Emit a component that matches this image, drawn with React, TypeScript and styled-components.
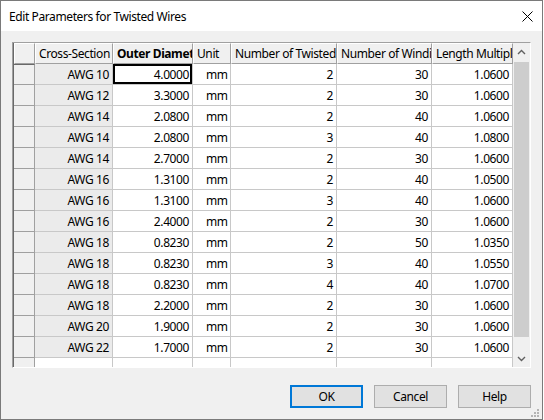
import styled, { createGlobalStyle } from "styled-components";

const GlobalStyle = createGlobalStyle`
  html, body {
    margin: 0;
    padding: 0;
    background: #ffffff;
  }
  body {
    font-family: "Noto Sans", "Liberation Sans", sans-serif;
    font-size: 12px;
    letter-spacing: -0.4px;
    color: #000;
  }
`;

type Row = [string, string, string, string, string, string];

const rows: Row[] = [
  ["AWG 10", "4.0000", "mm", "2", "30", "1.0600"],
  ["AWG 12", "3.3000", "mm", "2", "30", "1.0600"],
  ["AWG 14", "2.0800", "mm", "2", "40", "1.0600"],
  ["AWG 14", "2.0800", "mm", "3", "40", "1.0800"],
  ["AWG 14", "2.7000", "mm", "2", "30", "1.0600"],
  ["AWG 16", "1.3100", "mm", "2", "40", "1.0500"],
  ["AWG 16", "1.3100", "mm", "3", "40", "1.0600"],
  ["AWG 16", "2.4000", "mm", "2", "30", "1.0600"],
  ["AWG 18", "0.8230", "mm", "2", "50", "1.0350"],
  ["AWG 18", "0.8230", "mm", "3", "40", "1.0550"],
  ["AWG 18", "0.8230", "mm", "4", "40", "1.0700"],
  ["AWG 18", "2.2000", "mm", "2", "30", "1.0600"],
  ["AWG 20", "1.9000", "mm", "2", "30", "1.0600"],
  ["AWG 22", "1.7000", "mm", "2", "30", "1.0600"],
];

const headers = [
  "Cross-Section",
  "Outer Diameter",
  "Unit",
  "Number of Twisted Wires",
  "Number of Windings",
  "Length Multiplier",
];

const COLS = "21px 78px 80px 38px 106px 95px 81px";

const Window = styled.div`
  width: 543px;
  height: 420px;
  box-sizing: border-box;
  border: 1px solid #7a7a7a;
  background: #f0f0f0;
  display: flex;
  flex-direction: column;
`;

const TitleBar = styled.div`
  height: 30px;
  background: #ffffff;
  display: flex;
  align-items: center;
  justify-content: space-between;
  padding: 0 9px 0 8px;
  flex-shrink: 0;
`;

const Title = styled.span`
  font-size: 12px;
  color: #000;
`;

const CloseButton = styled.div`
  width: 12px;
  height: 12px;
  display: flex;
  align-items: center;
  justify-content: center;
`;

const Body = styled.div`
  flex: 1;
  display: flex;
  flex-direction: column;
  padding: 11px;
`;

const GridFrame = styled.div`
  height: 326px;
  display: flex;
  box-sizing: border-box;
  border-top: 1px solid #a0a0a0;
  border-left: 1px solid #a0a0a0;
  border-right: 1px solid #ffffff;
  border-bottom: 1px solid #ffffff;
  background: #ffffff;
`;

const GridInner = styled.div`
  flex: 1;
  display: flex;
  border-left: 1px solid #696969;
  overflow: hidden;
`;

const Table = styled.div`
  width: 499px;
  overflow: hidden;
  display: flex;
  flex-direction: column;
`;

const GridRow = styled.div`
  display: grid;
  grid-template-columns: ${COLS};
  height: 21px;
  flex-shrink: 0;
`;

const HeadCell = styled.div<{ $bold?: boolean }>`
  box-sizing: border-box;
  background: #f0f0f0;
  border-left: 1px solid #ffffff;
  border-top: 1px solid #ffffff;
  border-right: 1px solid #a0a0a0;
  border-bottom: 1px solid #a0a0a0;
  padding: 0 0 0 3px;
  display: flex;
  align-items: center;
  white-space: nowrap;
  overflow: hidden;
  font-weight: ${(p) => (p.$bold ? 700 : 400)};
`;

const RowHead = styled.div<{ $current?: boolean }>`
  box-sizing: border-box;
  background: #f0f0f0;
  border-right: 1px solid #a0a0a0;
  border-bottom: 1px solid #a0a0a0;
  border-top: ${(p) => (p.$current ? "1px solid #696969" : "none")};
`;

const Cell = styled.div<{
  $align?: "left" | "right";
  $shade?: boolean;
  $selected?: boolean;
}>`
  box-sizing: border-box;
  background: ${(p) => (p.$shade ? "#ebebeb" : "#ffffff")};
  border-right: 1px solid #c8c8c8;
  border-bottom: 1px solid #c8c8c8;
  display: flex;
  align-items: center;
  justify-content: ${(p) => (p.$align === "left" ? "flex-start" : "flex-end")};
  padding: ${(p) => (p.$align === "left" ? "0 0 0 13px" : "0 3px 0 0")};
  white-space: nowrap;
  overflow: hidden;
  box-shadow: ${(p) => (p.$selected ? "inset 0 0 0 2px #000" : "none")};
`;

const ScrollBar = styled.div`
  width: 17px;
  background: #f0f0f0;
  display: flex;
  flex-direction: column;
  flex-shrink: 0;
`;

const ScrollArrow = styled.div`
  height: 17px;
  display: flex;
  align-items: center;
  justify-content: center;
  flex-shrink: 0;
`;

const ScrollTrack = styled.div`
  flex: 1;
  padding: 2px 1px;
  display: flex;
  flex-direction: column;
`;

const Thumb = styled.div`
  height: 275px;
  background: #cdcdcd;
`;

const Footer = styled.div`
  margin-top: auto;
  display: flex;
  justify-content: flex-end;
  gap: 11px;
  position: relative;
`;

const Button = styled.button<{ $default?: boolean }>`
  width: 73px;
  height: 23px;
  box-sizing: border-box;
  background: #e1e1e1;
  border: ${(p) => (p.$default ? "2px solid #0078d7" : "1px solid #adadad")};
  font-family: "Noto Sans", "Liberation Sans", sans-serif;
  font-size: 12px;
  letter-spacing: -0.4px;
  color: #000;
  padding: 0;
`;

const Grip = styled.svg`
  position: absolute;
  right: -9px;
  bottom: -10px;
`;

const Chevron = ({ up }: { up?: boolean }) => (
  <svg width="9" height="6" viewBox="0 0 9 6">
    <path
      d={up ? "M1 5 L4.5 1.5 L8 5" : "M1 1 L4.5 4.5 L8 1"}
      fill="none"
      stroke="#606060"
      strokeWidth="1.4"
    />
  </svg>
);

export default function App() {
  return (
    <>
      <GlobalStyle />
      <Window>
        <TitleBar>
          <Title>Edit Parameters for Twisted Wires</Title>
          <CloseButton>
            <svg width="11" height="11" viewBox="0 0 11 11">
              <path d="M0.5 0.5 L10.5 10.5 M10.5 0.5 L0.5 10.5" stroke="#000" strokeWidth="1" />
            </svg>
          </CloseButton>
        </TitleBar>
        <Body>
          <GridFrame>
            <GridInner>
              <Table>
                <GridRow>
                  <HeadCell />
                  {headers.map((h, i) => (
                    <HeadCell key={h} $bold={i === 1}>
                      {h}
                    </HeadCell>
                  ))}
                </GridRow>
                {rows.map((r, ri) => (
                  <GridRow key={ri}>
                    <RowHead $current={ri === 0} />
                    <Cell $shade>{r[0]}</Cell>
                    <Cell $selected={ri === 0}>{r[1]}</Cell>
                    <Cell $align="left">{r[2]}</Cell>
                    <Cell>{r[3]}</Cell>
                    <Cell>{r[4]}</Cell>
                    <Cell>{r[5]}</Cell>
                  </GridRow>
                ))}
                <GridRow>
                  <RowHead />
                  <Cell />
                  <Cell />
                  <Cell />
                  <Cell />
                  <Cell />
                  <Cell />
                </GridRow>
              </Table>
              <ScrollBar>
                <ScrollArrow>
                  <Chevron up />
                </ScrollArrow>
                <ScrollTrack>
                  <Thumb />
                </ScrollTrack>
                <ScrollArrow>
                  <Chevron />
                </ScrollArrow>
              </ScrollBar>
            </GridInner>
          </GridFrame>
          <Footer>
            <Button $default>OK</Button>
            <Button>Cancel</Button>
            <Button>Help</Button>
            <Grip width="9" height="9" viewBox="0 0 9 9">
              {[
                [6, 0],
                [6, 3],
                [3, 3],
                [6, 6],
                [3, 6],
                [0, 6],
              ].map(([x, y]) => (
                <rect key={`${x}-${y}`} x={x} y={y} width="2" height="2" fill="#b4b4b4" />
              ))}
            </Grip>
          </Footer>
        </Body>
      </Window>
    </>
  );
}
